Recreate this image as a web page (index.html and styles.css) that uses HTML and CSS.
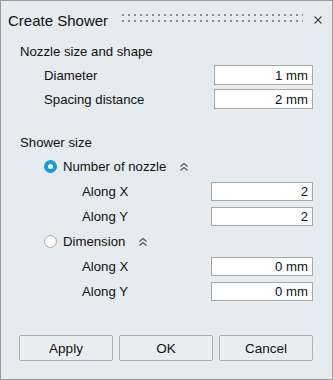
FILE: index.html
```html
<!DOCTYPE html>
<html lang="en">
<head>
  <meta charset="UTF-8">
  <title>Create Shower</title>
  <link rel="stylesheet" href="styles.css">
</head>
<body>
  <div class="dialog">
    <div class="titlebar">
      <span class="title">Create Shower</span>
      <span class="grip"></span>
      <svg class="close" width="8" height="8" viewBox="0 0 8 8">
        <path d="M0.5 0.5 L7.5 7.5 M7.5 0.5 L0.5 7.5" stroke="#444" stroke-width="1.1" fill="none"/>
      </svg>
    </div>

    <!-- Nozzle size -->
    <div class="section-title">Nozzle size and shape</div>
    <div class="row top">
      <span class="label">Diameter</span>
      <input class="field wide" type="text" value="1 mm">
    </div>
    <div class="row top">
      <span class="label">Spacing distance</span>
      <input class="field wide" type="text" value="2 mm">
    </div>

    <!-- Shower size -->
    <div class="section-title gap">Shower size</div>
    <div class="row option">
      <span class="radio checked"></span>
      <span>Number of nozzle</span>
      <svg class="chevron" width="10" height="10" viewBox="0 0 10 10">
        <path d="M1.5 4.5 L5 1.5 L8.5 4.5 M1.5 8.5 L5 5.5 L8.5 8.5" stroke="#555" stroke-width="1.2" fill="none"/>
      </svg>
    </div>
    <div class="row sub">
      <span class="label">Along X</span>
      <input class="field" type="text" value="2">
    </div>
    <div class="row sub">
      <span class="label">Along Y</span>
      <input class="field" type="text" value="2">
    </div>
    <div class="row option">
      <span class="radio"></span>
      <span>Dimension</span>
      <svg class="chevron" width="10" height="10" viewBox="0 0 10 10">
        <path d="M1.5 4.5 L5 1.5 L8.5 4.5 M1.5 8.5 L5 5.5 L8.5 8.5" stroke="#555" stroke-width="1.2" fill="none"/>
      </svg>
    </div>
    <div class="row sub">
      <span class="label">Along X</span>
      <input class="field" type="text" value="0 mm">
    </div>
    <div class="row sub">
      <span class="label">Along Y</span>
      <input class="field" type="text" value="0 mm">
    </div>

    <div class="buttons">
      <button>Apply</button>
      <button>OK</button>
      <button>Cancel</button>
    </div>
  </div>
</body>
</html>
```

FILE: styles.css
```css
* {
  margin: 0;
  padding: 0;
  box-sizing: border-box;
}

body {
  font-family: 'Liberation Sans', Arial, sans-serif;
  font-size: 13.2px;
  color: #111;
  background: #e5ebee;
}

/* Dialog frame */
.dialog {
  width: 333px;
  height: 380px;
  border: 1px solid #9c9c9c;
  background: #e5ebee;
  display: flex;
  flex-direction: column;
}

.titlebar {
  height: 38px;
  display: flex;
  align-items: center;
  padding: 0 10px 0 7px;
}

.title {
  font-size: 15px;
}

/* dotted drag handle */
.grip {
  flex: 1;
  height: 12px;
  margin: 0 11px 0 14px;
  background-image:
    linear-gradient(to bottom, transparent 2px, #e5ebee 2px),
    linear-gradient(to right, #8e8e8e 2px, transparent 2px);
  background-size: 6px 6px;
}

.section-title {
  height: 24px;
  display: flex;
  align-items: center;
  padding-left: 19px;
}

.section-title.gap {
  margin-top: 19px;
}

.row {
  display: flex;
  align-items: center;
  padding-right: 19px;
}

.row.top {
  height: 24px;
  padding-left: 43px;
}

.row.option {
  height: 25px;
  padding-left: 43px;
}

.row.sub {
  height: 25px;
  padding-left: 81px;
}

.label {
  flex: 1;
}

.field {
  width: 102px;
  height: 19px;
  border: 1px solid #a8a8a8;
  background: #fff;
  font: inherit;
  color: #111;
  text-align: right;
  padding: 0 4px;
  outline: none;
}

.field.wide {
  width: 99px;
  height: 20px;
}

/* radio buttons */
.radio {
  width: 13px;
  height: 13px;
  border-radius: 50%;
  border: 1px solid #a9a9a9;
  background: #fff;
  margin-right: 6px;
}

.radio.checked {
  border: 4px solid #1a9be0;
}

.chevron {
  margin-left: 13px;
}

/* bottom buttons */
.buttons {
  margin-top: auto;
  margin-bottom: 18px;
  padding: 0 19px 0 18px;
  display: flex;
  gap: 6px;
}

button {
  flex: 1;
  height: 26px;
  font: inherit;
  font-size: 13.5px;
  color: #111;
  background: #e8edf0;
  border: 1px solid #adadad;
  border-radius: 2px;
}
```
